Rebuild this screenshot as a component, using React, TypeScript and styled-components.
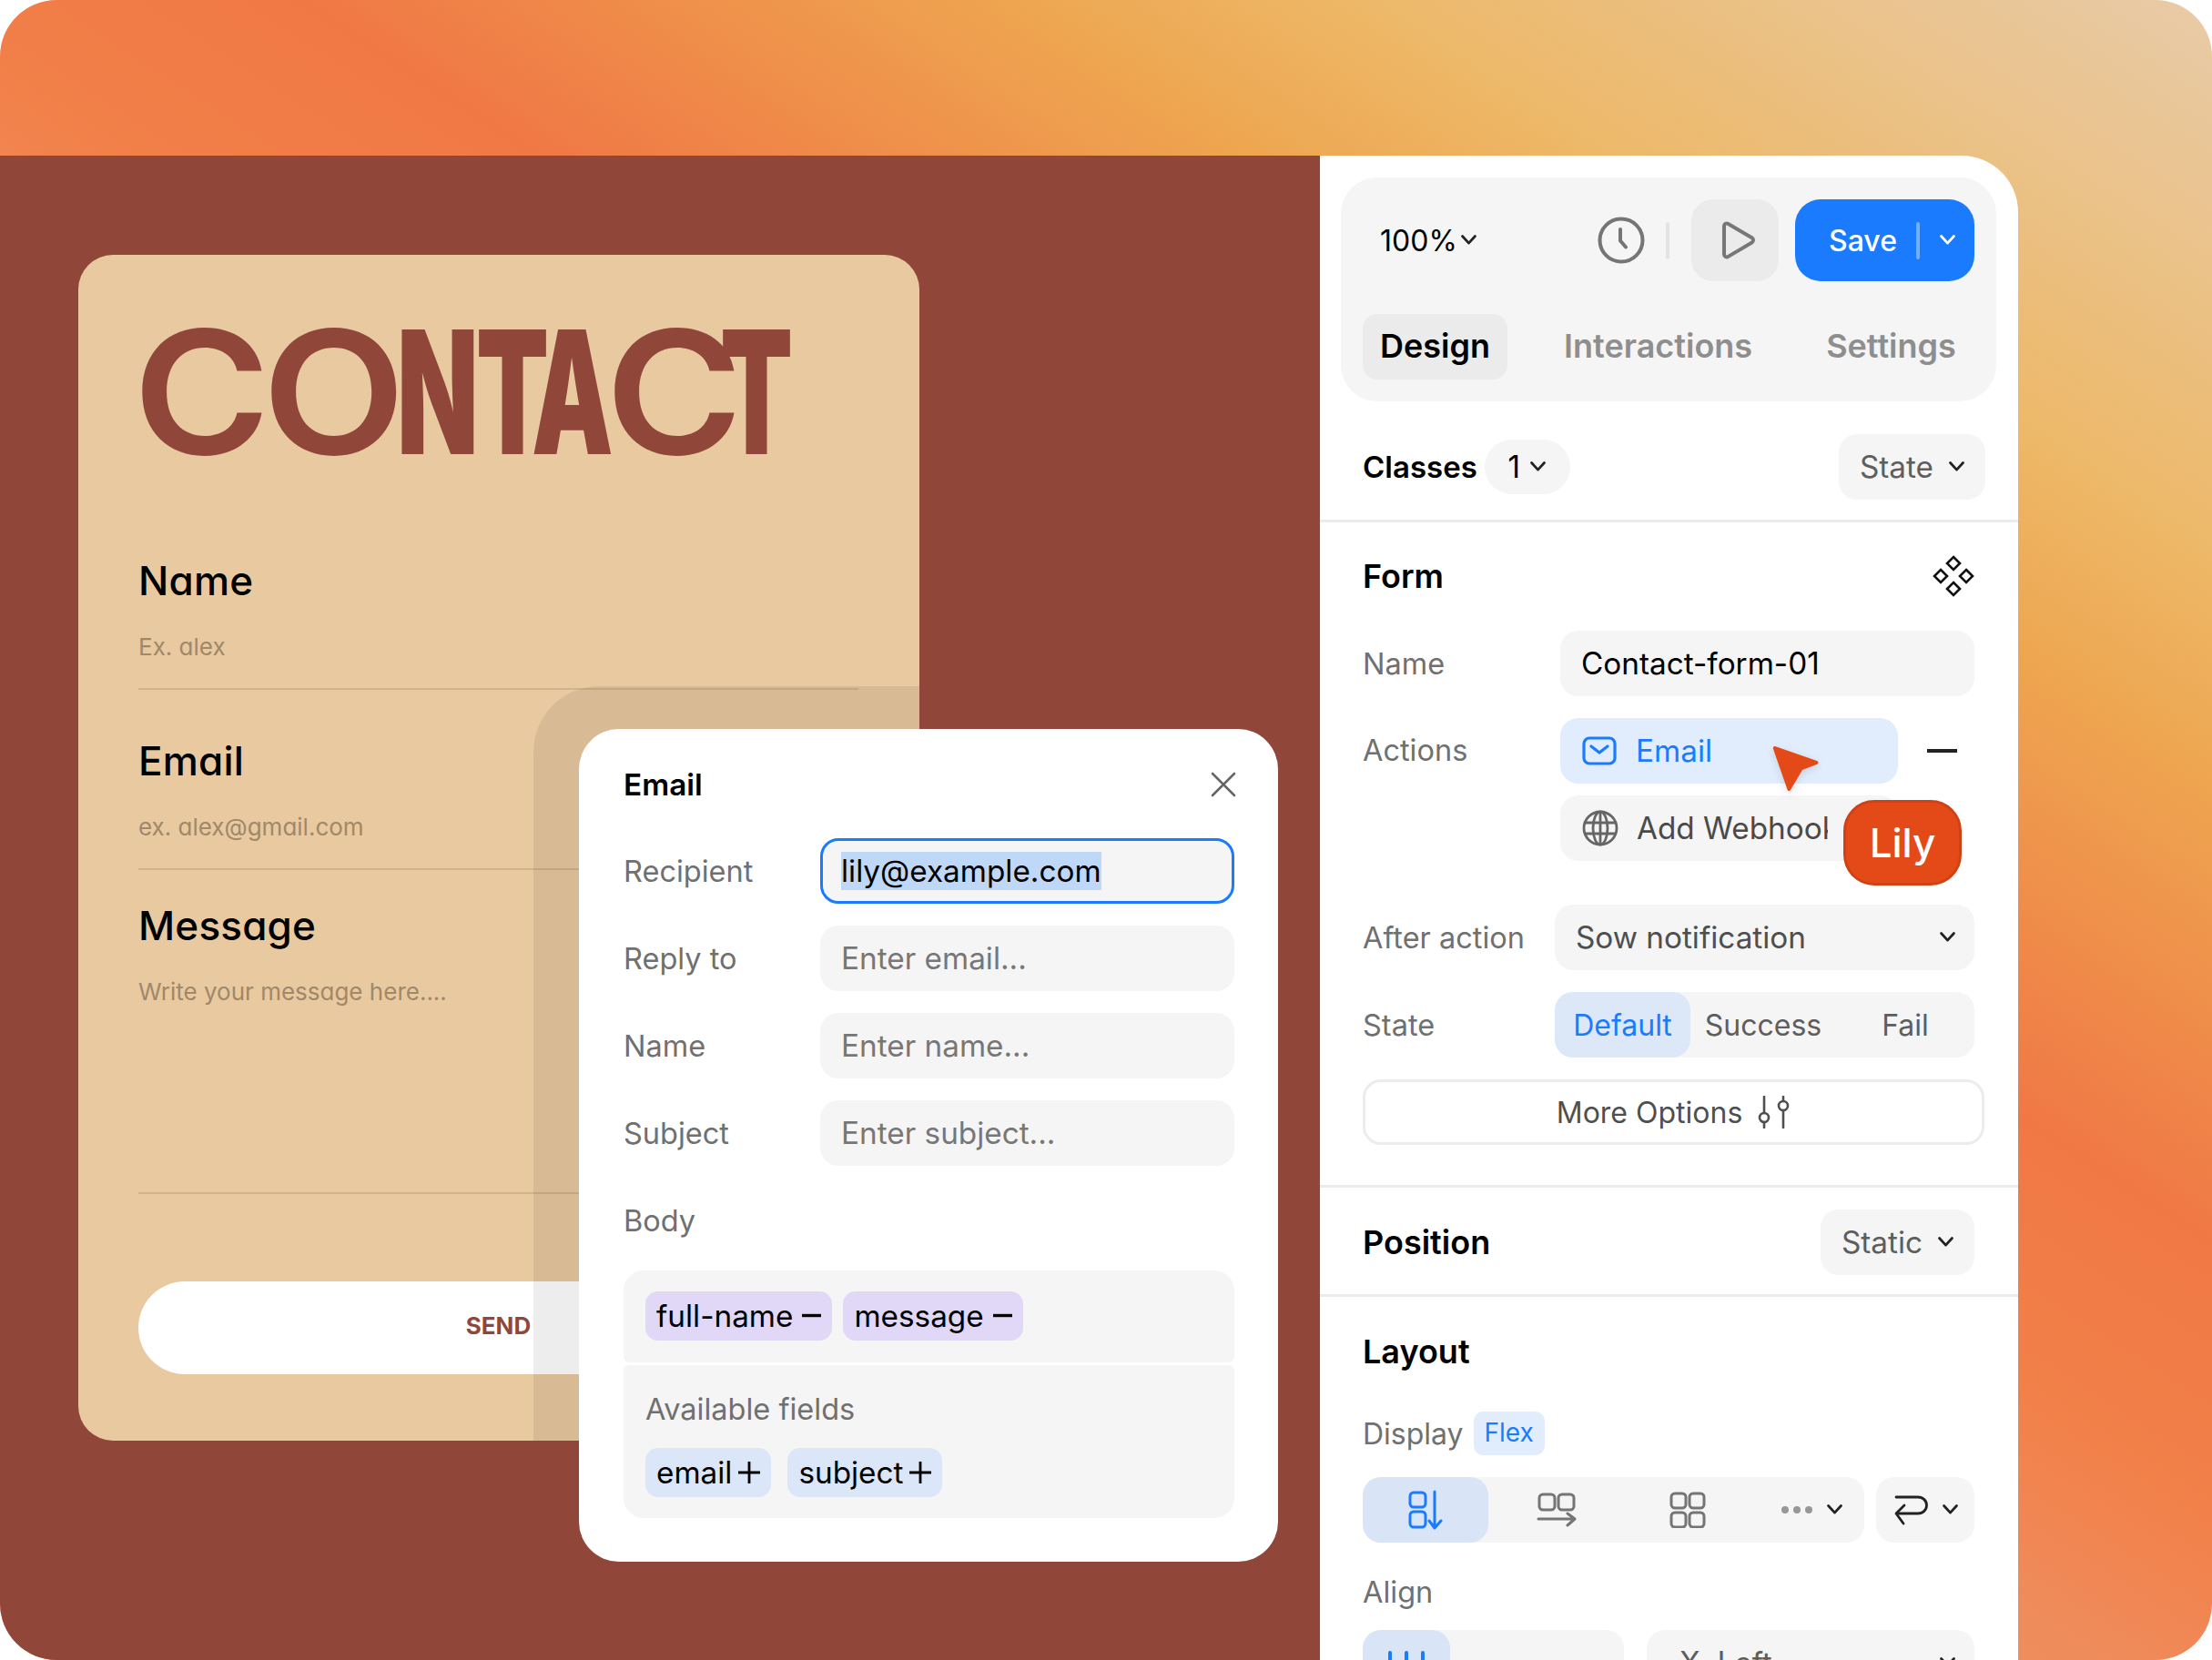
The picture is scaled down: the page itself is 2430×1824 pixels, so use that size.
import styled, { createGlobalStyle } from "styled-components";

const GlobalStyle = createGlobalStyle`
  html, body {
    margin: 0;
    padding: 0;
    background: #ffffff;
  }
  * {
    box-sizing: border-box;
  }
`;

const Page = styled.div`
  width: 2430px;
  height: 1824px;
  overflow: hidden;
  border-radius: 62px;
  padding-top: 171px;
  display: flex;
  font-family: "Inter", "Liberation Sans", sans-serif;
  font-size: 33.3px;
  background: linear-gradient(33deg, #f09a72 0%, #ef8c5c 44%, #f28049 51%, #f07845 60%, #eea650 75%, #edb868 82%, #e8cba8 100%);
`;

const Canvas = styled.div`
  position: relative;
  width: 1450px;
  height: 1653px;
  background: #90473a;
  padding: 109px 0 0 86px;
`;

const Card = styled.div`
  position: relative;
  overflow: hidden;
  width: 924px;
  height: 1303px;
  border-radius: 38px;
  background: #e9c9a0;
  padding: 57px 67px 0 66px;
`;

const Backdrop = styled.div`
  position: absolute;
  left: 500px;
  top: 474px;
  width: 600px;
  height: 900px;
  border-radius: 72px;
  background: rgba(0, 0, 0, 0.07);
`;

const Hero = styled.div`
  display: flex;
  height: 201px;
  margin-left: -6px;
  color: #90473a;
  font-size: 188px;
  line-height: 1;
`;

const Glyph = styled.span<{ $w: number; $sx: number; $weight: number }>`
  display: block;
  width: ${(p) => p.$w}px;
  font-weight: ${(p) => p.$weight};
  transform: scaleX(${(p) => p.$sx});
  transform-origin: left center;
`;

const Field = styled.div<{ $top: number; $height: number }>`
  margin-top: ${(p) => p.$top}px;
  height: ${(p) => p.$height}px;
  border-bottom: 2px solid #d2b38c;
`;

const FieldLabel = styled.div`
  height: 60px;
  line-height: 60px;
  font-size: 44px;
  font-weight: 500;
  letter-spacing: 0.2px;
  color: #000000;
  font-feature-settings: "cv11";
`;

const FieldHint = styled.div`
  margin-top: 23px;
  height: 40px;
  line-height: 40px;
  font-size: 26px;
  color: #a08868;
  font-feature-settings: "cv11";
`;

const SendButton = styled.div`
  margin-top: 96px;
  height: 102px;
  line-height: 98px;
  border-radius: 51px;
  background: #ffffff;
  color: #90473a;
  font-size: 26px;
  font-weight: 700;
  text-align: center;
`;

const Modal = styled.div`
  position: absolute;
  left: 636px;
  top: 630px;
  width: 768px;
  height: 915px;
  border-radius: 44px;
  background: #ffffff;
  padding: 36px 48px 0 49px;
`;

const ModalHead = styled.div`
  display: flex;
  align-items: center;
  justify-content: space-between;
  height: 50px;
  margin-bottom: 34px;
  font-weight: 600;
  color: #000000;

  svg {
    margin-right: -2px;
  }
`;

const ModalRow = styled.div`
  display: flex;
  align-items: center;
  height: 72px;
  margin-bottom: 24px;
`;

const ModalLabel = styled.div`
  width: 216px;
  font-size: 32.5px;
  color: #707070;
`;

const Input = styled.div<{ $focus?: boolean; $muted?: boolean }>`
  flex: 1;
  height: 72px;
  display: flex;
  align-items: center;
  padding-left: ${(p) => (p.$focus ? 20 : 23)}px;
  border-radius: 20px;
  background: #f5f5f5;
  border: ${(p) => (p.$focus ? "3px solid #1a7bff" : "none")};
  color: ${(p) => (p.$muted ? "#777777" : "#000000")};
`;

const Selection = styled.span`
  display: block;
  line-height: 42px;
  background: #bfd8f7;
`;

const BodyLabel = styled.div`
  margin-top: 37px;
  height: 48px;
  line-height: 48px;
  font-size: 32.5px;
  color: #707070;
`;

const BodyBox = styled.div<{ $bottom?: boolean }>`
  background: #f5f5f5;
  padding: ${(p) => (p.$bottom ? "26px 24px 0" : "23px 24px 0")};
  height: ${(p) => (p.$bottom ? 168 : 101)}px;
  margin-top: ${(p) => (p.$bottom ? 3 : 30)}px;
  border-radius: ${(p) => (p.$bottom ? "6px 6px 22px 22px" : "22px 22px 6px 6px")};
`;

const TagRow = styled.div<{ $gap: number }>`
  display: flex;
  gap: ${(p) => p.$gap}px;
`;

const Tag = styled.div<{ $tone: "purple" | "blue" }>`
  display: flex;
  align-items: center;
  gap: ${(p) => (p.$tone === "purple" ? 10 : 7)}px;
  height: 54px;
  padding: 0 12px;
  border-radius: 14px;
  background: ${(p) => (p.$tone === "purple" ? "#e0d8f6" : "#dbe7f8")};
  color: #000000;
`;

const AvailableLabel = styled.div`
  height: 46px;
  line-height: 46px;
  margin-bottom: 19px;
  font-size: 32.5px;
  color: #707070;
`;

const Panel = styled.aside`
  width: 767px;
  height: 1653px;
  background: #ffffff;
  border-top-right-radius: 62px;
  overflow: hidden;
  padding-top: 24px;
`;

const Toolbar = styled.div`
  margin: 0 24px 0 23px;
  height: 246px;
  padding: 24px 24px 0;
  border-radius: 40px;
  background: #f5f5f5;
`;

const ToolRow = styled.div`
  display: flex;
  align-items: center;
  height: 90px;
`;

const ZoomValue = styled.div`
  display: flex;
  align-items: center;
  gap: 3px;
  margin: 0 auto 0 19px;
  font-size: 32px;
  color: #000000;
`;

const VSep = styled.div<{ $light?: boolean }>`
  width: 4px;
  height: 41px;
  border-radius: 2px;
  background: ${(p) => (p.$light ? "rgba(255, 255, 255, 0.4)" : "#e4e4e4")};
`;

const PlayButton = styled.div`
  display: flex;
  align-items: center;
  justify-content: center;
  width: 96px;
  height: 90px;
  margin: 0 18px 0 24px;
  padding-left: 7px;
  border-radius: 24px;
  background: #ebebeb;
`;

const SaveButton = styled.div`
  display: flex;
  align-items: center;
  width: 197px;
  height: 90px;
  padding-left: 37px;
  border-radius: 28px;
  background: #1a7bff;
  color: #ffffff;
  font-size: 32px;
  font-weight: 500;
  gap: 21px;
`;

const Tabs = styled.div`
  display: flex;
  gap: 43px;
  margin-top: 36px;
`;

const Tab = styled.div<{ $active?: boolean }>`
  height: 72px;
  line-height: 70px;
  padding: 0 19px;
  border-radius: 16px;
  font-size: 36px;
  font-weight: 600;
  background: ${(p) => (p.$active ? "#ebebeb" : "transparent")};
  color: ${(p) => (p.$active ? "#000000" : "#8e8e8e")};
`;

const Section = styled.section<{ $top: number; $bottom: number; $line?: boolean }>`
  padding: ${(p) => p.$top}px 48px ${(p) => p.$bottom}px 47px;
  border-bottom: ${(p) => (p.$line ? "3px solid #ebebeb" : "none")};
`;

const TitleRow = styled.div`
  display: flex;
  align-items: center;
  justify-content: space-between;
  height: 72px;
`;

const SectionTitle = styled.div<{ $size?: number }>`
  font-size: ${(p) => p.$size ?? 36}px;
  font-weight: 600;
  color: #000000;
`;

const ClassGroup = styled.div`
  display: flex;
  align-items: center;
  gap: 8px;
`;

const CountPill = styled.div`
  display: flex;
  align-items: center;
  justify-content: center;
  gap: 10px;
  width: 94px;
  height: 60px;
  border-radius: 30px;
  background: #f5f5f5;
`;

const Dropdown = styled.div<{ $shift?: number }>`
  display: flex;
  align-items: center;
  gap: 16px;
  height: 72px;
  padding: 0 22px 0 23px;
  margin-right: ${(p) => -(p.$shift ?? 0)}px;
  border-radius: 20px;
  background: #f5f5f5;
  color: #5e5e5e;
`;

const PropRow = styled.div<{ $label: number; $top?: number }>`
  display: grid;
  grid-template-columns: ${(p) => p.$label}px 1fr;
  align-items: center;
  min-height: 72px;
  margin-top: ${(p) => p.$top ?? 24}px;
`;

const PropLabel = styled.div<{ $start?: boolean }>`
  align-self: ${(p) => (p.$start ? "start" : "center")};
  line-height: ${(p) => (p.$start ? "72px" : "normal")};
  font-size: 32.5px;
  color: #707070;
`;

const ActionStack = styled.div`
  position: relative;
  display: flex;
  flex-direction: column;
  gap: 13px;
`;

const ActionLine = styled.div`
  display: flex;
  align-items: center;
  gap: 32px;
`;

const ActionPill = styled.div<{ $active?: boolean }>`
  display: flex;
  align-items: center;
  gap: ${(p) => (p.$active ? 21 : 20)}px;
  width: 371px;
  height: 72px;
  padding-left: 24px;
  border-radius: 20px;
  background: ${(p) => (p.$active ? "#e1edfd" : "#f5f5f5")};
  color: ${(p) => (p.$active ? "#1a7bff" : "#4a4a4a")};
`;

const Clipped = styled.div`
  width: 210px;
  overflow: hidden;
  white-space: nowrap;
`;

const Minus = styled.div`
  width: 33px;
  height: 4px;
  background: #222222;
`;

const CursorMark = styled.svg`
  position: absolute;
  left: 232px;
  top: 28px;
  filter: drop-shadow(0 3px 4px rgba(0, 0, 0, 0.12));
`;

const NameTag = styled.div`
  position: absolute;
  left: 311px;
  top: 90px;
  display: flex;
  align-items: center;
  justify-content: center;
  width: 130px;
  height: 94px;
  border-radius: 34px;
  border: 3px solid #cf4215;
  background: #e44a17;
  color: #ffffff;
  font-size: 44px;
  font-weight: 500;
`;

const SelectBox = styled.div`
  display: flex;
  align-items: center;
  justify-content: space-between;
  height: 72px;
  padding: 0 20px 0 23px;
  border-radius: 20px;
  background: #f5f5f5;
  color: #4f4f4f;
`;

const Segmented = styled.div`
  display: flex;
  height: 72px;
  border-radius: 20px;
  background: #f5f5f5;
  align-items: center;
  font-size: 32px;
`;

const SegItem = styled.div<{ $active?: boolean; $w: number }>`
  width: ${(p) => p.$w}px;
  height: 72px;
  display: flex;
  align-items: center;
  justify-content: center;
  border-radius: 20px;
  background: ${(p) => (p.$active ? "#dce7f8" : "transparent")};
  color: ${(p) => (p.$active ? "#1a7bff" : "#5e5e5e")};
`;

const OutlineButton = styled.div`
  display: flex;
  align-items: center;
  justify-content: center;
  gap: 17px;
  height: 72px;
  margin: 24px -11px 0 0;
  border: 3px solid #ececec;
  border-radius: 20px;
  font-size: 32px;
  color: #4f4f4f;
`;

const DisplayRow = styled.div`
  display: flex;
  align-items: center;
  gap: 11px;
  margin-top: 30px;
  height: 48px;
  font-size: 32px;
  color: #707070;
`;

const FlexBadge = styled.div`
  height: 48px;
  line-height: 46px;
  padding: 0 12px;
  border-radius: 10px;
  background: #e1edfd;
  color: #1a7bff;
  font-size: 28px;
`;

const ToolStrip = styled.div<{ $top: number }>`
  display: flex;
  gap: 13px;
  margin-top: ${(p) => p.$top}px;
`;

const StripGroup = styled.div<{ $w: number }>`
  display: flex;
  align-items: center;
  width: ${(p) => p.$w}px;
  height: 72px;
  border-radius: 20px;
  background: #f5f5f5;
  color: #5e5e5e;
`;

const StripCell = styled.div<{ $w: number; $active?: boolean }>`
  display: flex;
  flex-shrink: 0;
  align-items: center;
  justify-content: center;
  gap: 14px;
  width: ${(p) => p.$w}px;
  height: 72px;
  border-radius: 20px;
  background: ${(p) => (p.$active ? "#d9e5f6" : "transparent")};
`;

const LeftSelect = styled.div`
  display: flex;
  align-items: center;
  justify-content: space-between;
  width: 360px;
  height: 72px;
  margin-left: 12px;
  padding: 0 20px 0 36px;
  border-radius: 20px;
  background: #f5f5f5;
  color: #5e5e5e;
`;

const AlignLabel = styled.div`
  margin-top: 31px;
  height: 48px;
  line-height: 48px;
  font-size: 32.5px;
  color: #707070;
`;

const Chevron = ({ color = "#222222", size = 19 }: { color?: string; size?: number }) => (
  <svg width={size} height={size * 0.7} viewBox="0 0 15 10.5" fill="none">
    <path d="M2 2l5.500 6L13 2" stroke={color} strokeWidth="2.2" strokeLinecap="round" strokeLinejoin="round" />
  </svg>
);

const CloseIcon = () => (
  <svg width="28" height="28" viewBox="0 0 28 28" fill="none">
    <path d="M2 2l24 24M26 2L2 26" stroke="#666666" strokeWidth="2.6" strokeLinecap="round" />
  </svg>
);

const ClockIcon = () => (
  <svg width="52" height="52" viewBox="0 0 52 52" fill="none" style={{ marginRight: 23 }}>
    <circle cx="26" cy="26" r="23.5" stroke="#757575" strokeWidth="4" />
    <path d="M25 14v12.5l6 7" stroke="#757575" strokeWidth="4" strokeLinecap="round" strokeLinejoin="round" />
  </svg>
);

const PlayIcon = () => (
  <svg width="38" height="42" viewBox="0 0 38 42" fill="none">
    <path d="M3 5.500c0-2.500 2.600-3.800 4.600-2.400l26 15.200c1.900 1.100 1.900 4 0 5.100L7.600 38.900C5.600 40.200 3 38.900 3 36.500z" stroke="#777777" strokeWidth="4" strokeLinejoin="round" />
  </svg>
);

const DiamondsIcon = () => (
  <svg width="46" height="46" viewBox="0 0 46 46" fill="none" stroke="#111111" strokeWidth="2.6">
    <path d="M23 2l7 7-7 7-7-7z" />
    <path d="M23 30l7 7-7 7-7-7z" />
    <path d="M9 16l7 7-7 7-7-7z" />
    <path d="M37 16l7 7-7 7-7-7z" />
  </svg>
);

const MailIcon = () => (
  <svg width="38" height="32" viewBox="0 0 38 32" fill="none" stroke="#1a7bff" strokeWidth="3.2" strokeLinecap="round" strokeLinejoin="round">
    <rect x="2" y="2" width="34" height="28" rx="6" />
    <path d="M10 11l9 7 9-7" />
  </svg>
);

const GlobeIcon = () => (
  <svg width="40" height="40" viewBox="0 0 40 40" fill="none" stroke="#666666" strokeWidth="2.8">
    <circle cx="20" cy="20" r="18" />
    <ellipse cx="20" cy="20" rx="8" ry="18" />
    <path d="M20 2v36M3 14h34M3 26h34" />
  </svg>
);

const SlidersIcon = () => (
  <svg width="36" height="36" viewBox="0 0 36 36" fill="none" stroke="#4f4f4f" strokeWidth="2.6" strokeLinecap="round">
    <path d="M7 1v18M7 29v6M28 1v5M28 16v19" />
    <circle cx="7" cy="24" r="5" />
    <circle cx="28" cy="11" r="5" />
  </svg>
);

const StackDownIcon = () => (
  <svg width="38" height="44" viewBox="0 0 38 44" fill="none" stroke="#1a7bff" strokeWidth="3" strokeLinecap="round" strokeLinejoin="round">
    <rect x="2" y="3" width="17" height="16" rx="4" />
    <rect x="2" y="24" width="17" height="17" rx="4" />
    <path d="M29 2v39M23 34l6 8 7-8" />
  </svg>
);

const RowRightIcon = () => (
  <svg width="44" height="38" viewBox="0 0 44 38" fill="none" stroke="#757575" strokeWidth="3" strokeLinecap="round" strokeLinejoin="round">
    <rect x="3" y="2" width="17" height="17" rx="4" />
    <rect x="24" y="2" width="17" height="17" rx="4" />
    <path d="M2 29h39M34 23l8 6-8 7" />
  </svg>
);

const GridIcon = () => (
  <svg width="40" height="40" viewBox="0 0 40 40" fill="none" stroke="#757575" strokeWidth="3">
    <rect x="2" y="2" width="16" height="16" rx="4" />
    <rect x="22" y="2" width="16" height="16" rx="4" />
    <rect x="2" y="23" width="16" height="16" rx="4" />
    <rect x="22" y="23" width="16" height="16" rx="4" />
  </svg>
);

const DotsIcon = () => (
  <svg width="36" height="10" viewBox="0 0 36 10" fill="#979797">
    <circle cx="5" cy="5" r="4" />
    <circle cx="18" cy="5" r="4" />
    <circle cx="31" cy="5" r="4" />
  </svg>
);

const WrapIcon = () => (
  <svg width="38" height="34" viewBox="0 0 38 34" fill="none" stroke="#222222" strokeWidth="2.8" strokeLinecap="round" strokeLinejoin="round">
    <path d="M2 3h24c5.500 0 9.500 4 9.500 9s-4 9-9.500 9H3" />
    <path d="M11 12l-9 9 8 11" />
  </svg>
);

const AlignIcon = () => (
  <svg width="44" height="28" viewBox="0 0 44 28" fill="none" stroke="#1a7bff" strokeWidth="4" strokeLinecap="round">
    <path d="M4 3v24M22 3v24M40 3v24" />
  </svg>
);

const TagMinus = () => (
  <svg width="21" height="20" viewBox="0 0 21 20">
    <path d="M0 9.500h21" stroke="#000000" strokeWidth="3.4" />
  </svg>
);

const TagPlus = () => (
  <svg width="24" height="24" viewBox="0 0 24 24">
    <path d="M0 12h24M12 0v24" stroke="#000000" strokeWidth="2.8" />
  </svg>
);

const letters = [
  { ch: "C", w: 142, sx: 1.09, weight: 600 },
  { ch: "O", w: 148, sx: 1.09, weight: 600 },
  { ch: "N", w: 87, sx: 0.62, weight: 900 },
  { ch: "T", w: 61, sx: 0.62, weight: 900 },
  { ch: "A", w: 81, sx: 0.6, weight: 900 },
  { ch: "C", w: 126, sx: 1.09, weight: 600 },
  { ch: "T", w: 70, sx: 0.62, weight: 900 },
];

export default function App() {
  return (
    <>
      <GlobalStyle />
      <Page>
        <Canvas>
          <Card>
            <Hero>
              {letters.map((l, i) => (
                <Glyph key={i} $w={l.w} $sx={l.sx} $weight={l.weight}>
                  {l.ch}
                </Glyph>
              ))}
            </Hero>
            <Field $top={70} $height={150}>
              <FieldLabel>Name</FieldLabel>
              <FieldHint>Ex. alex</FieldHint>
            </Field>
            <Field $top={48} $height={150}>
              <FieldLabel>Email</FieldLabel>
              <FieldHint>ex. alex@gmail.com</FieldHint>
            </Field>
            <Field $top={31} $height={325}>
              <FieldLabel>Message</FieldLabel>
              <FieldHint>Write your message here....</FieldHint>
            </Field>
            <SendButton>SEND</SendButton>
            <Backdrop />
          </Card>

          <Modal>
            <ModalHead>
              Email
              <CloseIcon />
            </ModalHead>
            <ModalRow>
              <ModalLabel>Recipient</ModalLabel>
              <Input $focus>
                <Selection>lily@example.com</Selection>
              </Input>
            </ModalRow>
            <ModalRow>
              <ModalLabel>Reply to</ModalLabel>
              <Input $muted>Enter email...</Input>
            </ModalRow>
            <ModalRow>
              <ModalLabel>Name</ModalLabel>
              <Input $muted>Enter name...</Input>
            </ModalRow>
            <ModalRow>
              <ModalLabel>Subject</ModalLabel>
              <Input $muted>Enter subject...</Input>
            </ModalRow>
            <BodyLabel>Body</BodyLabel>
            <BodyBox>
              <TagRow $gap={12}>
                <Tag $tone="purple">
                  full-name
                  <TagMinus />
                </Tag>
                <Tag $tone="purple">
                  message
                  <TagMinus />
                </Tag>
              </TagRow>
            </BodyBox>
            <BodyBox $bottom>
              <AvailableLabel>Available fields</AvailableLabel>
              <TagRow $gap={18}>
                <Tag $tone="blue">
                  email
                  <TagPlus />
                </Tag>
                <Tag $tone="blue">
                  subject
                  <TagPlus />
                </Tag>
              </TagRow>
            </BodyBox>
          </Modal>
        </Canvas>

        <Panel>
          <Toolbar>
            <ToolRow>
              <ZoomValue>
                100%
                <Chevron />
              </ZoomValue>
              <ClockIcon />
              <VSep />
              <PlayButton>
                <PlayIcon />
              </PlayButton>
              <SaveButton>
                Save
                <VSep $light />
                <Chevron color="#ffffff" />
              </SaveButton>
            </ToolRow>
            <Tabs>
              <Tab $active>Design</Tab>
              <Tab>Interactions</Tab>
              <Tab>Settings</Tab>
            </Tabs>
          </Toolbar>

          <Section $top={36} $bottom={22} $line>
            <TitleRow>
              <ClassGroup>
                <SectionTitle $size={33}>Classes</SectionTitle>
                <CountPill>
                  1
                  <Chevron />
                </CountPill>
              </ClassGroup>
              <Dropdown $shift={12}>
                State
                <Chevron />
              </Dropdown>
            </TitleRow>
          </Section>

          <Section $top={23} $bottom={44} $line>
            <TitleRow>
              <SectionTitle>Form</SectionTitle>
              <DiamondsIcon />
            </TitleRow>
            <PropRow $label={217}>
              <PropLabel>Name</PropLabel>
              <Input>Contact-form-01</Input>
            </PropRow>
            <PropRow $label={217}>
              <PropLabel $start>Actions</PropLabel>
              <ActionStack>
                <ActionLine>
                  <ActionPill $active>
                    <MailIcon />
                    Email
                  </ActionPill>
                  <Minus />
                </ActionLine>
                <ActionPill>
                  <GlobeIcon />
                  <Clipped>Add Webhook</Clipped>
                </ActionPill>
                <CursorMark width="54" height="56" viewBox="0 0 54 56">
                  <path d="M4 3l46 16c2 .8 2 3 .2 3.800L34 29 21 51c-1 1.800-3 1.400-3.500-.5L2 6c-.5-2 .5-3.500 2-3z" fill="#e44a17" />
                </CursorMark>
                <NameTag>Lily</NameTag>
              </ActionStack>
            </PropRow>
            <PropRow $label={211} $top={48}>
              <PropLabel>After action</PropLabel>
              <SelectBox>
                Sow notification
                <Chevron />
              </SelectBox>
            </PropRow>
            <PropRow $label={211}>
              <PropLabel>State</PropLabel>
              <Segmented>
                <SegItem $active $w={149}>Default</SegItem>
                <SegItem $w={160}>Success</SegItem>
                <SegItem $w={152}>Fail</SegItem>
              </Segmented>
            </PropRow>
            <OutlineButton>
              More Options
              <SlidersIcon />
            </OutlineButton>
          </Section>

          <Section $top={24} $bottom={21} $line>
            <TitleRow>
              <SectionTitle>Position</SectionTitle>
              <Dropdown>
                Static
                <Chevron />
              </Dropdown>
            </TitleRow>
          </Section>

          <Section $top={24} $bottom={0}>
            <TitleRow>
              <SectionTitle>Layout</SectionTitle>
            </TitleRow>
            <DisplayRow>
              Display
              <FlexBadge>Flex</FlexBadge>
            </DisplayRow>
            <ToolStrip $top={24}>
              <StripGroup $w={551}>
                <StripCell $w={138} $active>
                  <StackDownIcon />
                </StripCell>
                <StripCell $w={150}>
                  <RowRightIcon />
                </StripCell>
                <StripCell $w={137}>
                  <GridIcon />
                </StripCell>
                <StripCell $w={136}>
                  <DotsIcon />
                  <Chevron />
                </StripCell>
              </StripGroup>
              <StripGroup $w={108}>
                <StripCell $w={110}>
                  <WrapIcon />
                  <Chevron />
                </StripCell>
              </StripGroup>
            </ToolStrip>
            <AlignLabel>Align</AlignLabel>
            <ToolStrip $top={17}>
              <StripGroup $w={287}>
                <StripCell $w={96} $active>
                  <AlignIcon />
                </StripCell>
              </StripGroup>
              <LeftSelect>
                <span>X&nbsp;&nbsp;Left</span>
                <Chevron />
              </LeftSelect>
            </ToolStrip>
          </Section>
        </Panel>
      </Page>
    </>
  );
}
